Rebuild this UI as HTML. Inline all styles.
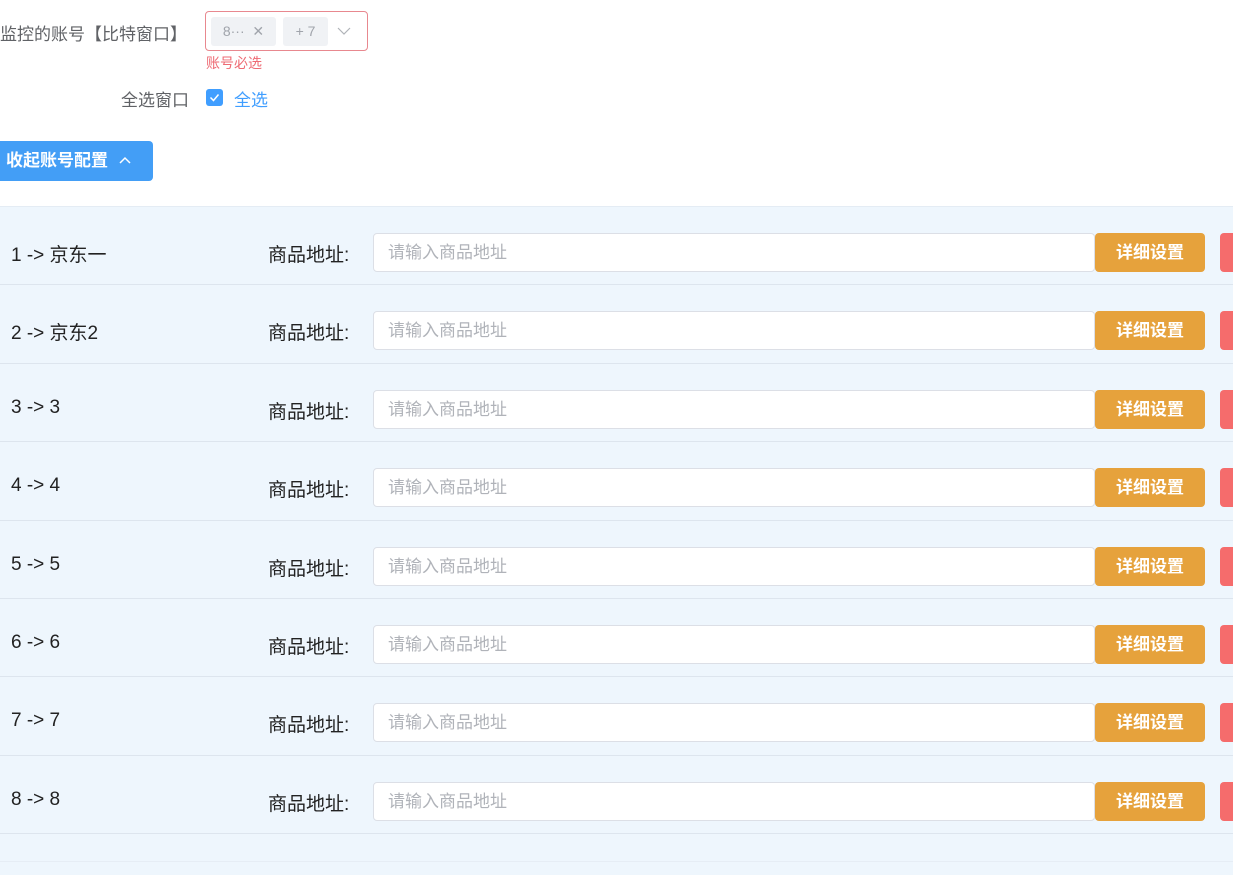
<!DOCTYPE html>
<html><head><meta charset="utf-8"><style>
*{box-sizing:border-box;margin:0;padding:0}
body{width:1233px;height:875px;overflow:hidden;background:#fff;font-family:"Liberation Sans","Noto Sans CJK SC",sans-serif;position:relative;color:#303133}
.abs{position:absolute}
.lbl{font-size:17px;color:#606266}
.sel{left:205px;top:11px;width:163px;height:40px;border:1px solid #e8888f;border-radius:4px}
.tag{top:5px;height:29px;background:#f0f2f5;border-radius:3px;color:#a0a4ab;font-size:14px;line-height:29px;text-align:center}
.err{left:206px;top:53px;font-size:14px;color:#ee6a73}
.cb{left:206px;top:89px;width:17px;height:17px;background:#409eff;border-radius:3px}
.btn{left:0;top:141px;width:153px;height:40px;background:#439ef6;border-radius:0 4px 4px 0;color:#fff;font-size:17px;font-weight:bold;line-height:40px;padding-left:6px}
.panel{left:0;top:206px;width:1233px;height:669px;background:#eef6fd;border-top:1px solid #e4ecf4}
.row{position:absolute;left:0;width:1233px;height:78.4px;border-bottom:1px solid #dde5ee}
.row .n{position:absolute;left:11px;top:33px;font-size:19px;color:#222}
.row .k{position:absolute;left:268px;top:33px;font-size:19px;color:#222}
.row .in{position:absolute;left:373px;top:26px;width:722px;height:39px;background:#fff;border:1px solid #dcdfe6;border-radius:4px;font-size:17px;color:#b0b3b9;line-height:37px;padding-left:14px}
.row .o{position:absolute;left:1095px;top:26px;width:110px;height:39px;background:#e6a23c;border-radius:4px;color:#fff;font-size:17px;font-weight:bold;line-height:39px;text-align:center}
.row .r{position:absolute;left:1220px;top:26px;width:30px;height:39px;background:#f56c6c;border-radius:4px}
</style></head><body>
<div class="abs lbl" style="left:0;top:20px">监控的账号【比特窗口】</div>
<div class="abs sel">
 <div class="abs tag" style="left:5px;width:65px">8··· &nbsp;✕</div>
 <div class="abs tag" style="left:77px;width:45px">+ 7</div>
 <svg class="abs" style="left:131px;top:14px" width="14" height="10" viewBox="0 0 14 10"><path d="M1 2 L7 8 L13 2" fill="none" stroke="#b0b3b9" stroke-width="1.2"/></svg>
</div>
<div class="abs err">账号必选</div>
<div class="abs lbl" style="left:121px;top:86px">全选窗口</div>
<div class="abs cb"><svg width="17" height="17" viewBox="0 0 17 17"><path d="M4.5 8.5 L7.5 11.5 L12.5 5.5" fill="none" stroke="#fff" stroke-width="1.5"/></svg></div>
<div class="abs" style="left:234px;top:86px;font-size:17px;color:#409eff">全选</div>
<div class="abs btn">收起账号配置 <svg style="margin-left:6px;vertical-align:2px" width="12" height="8" viewBox="0 0 12 8"><path d="M1 7 L6 2 L11 7" fill="none" stroke="#fff" stroke-width="1.5"/></svg></div>
<div class="abs panel">
 <div class="row" style="top:0"><span class="n">1 -&gt; 京东一</span><span class="k">商品地址:</span><div class="in">请输入商品地址</div><div class="o">详细设置</div><div class="r"></div></div>
 <div class="row" style="top:78.4px"><span class="n">2 -&gt; 京东2</span><span class="k">商品地址:</span><div class="in">请输入商品地址</div><div class="o">详细设置</div><div class="r"></div></div>
 <div class="row" style="top:156.8px"><span class="n">3 -&gt; 3</span><span class="k">商品地址:</span><div class="in">请输入商品地址</div><div class="o">详细设置</div><div class="r"></div></div>
 <div class="row" style="top:235.2px"><span class="n">4 -&gt; 4</span><span class="k">商品地址:</span><div class="in">请输入商品地址</div><div class="o">详细设置</div><div class="r"></div></div>
 <div class="row" style="top:313.6px"><span class="n">5 -&gt; 5</span><span class="k">商品地址:</span><div class="in">请输入商品地址</div><div class="o">详细设置</div><div class="r"></div></div>
 <div class="row" style="top:392px"><span class="n">6 -&gt; 6</span><span class="k">商品地址:</span><div class="in">请输入商品地址</div><div class="o">详细设置</div><div class="r"></div></div>
 <div class="row" style="top:470.4px"><span class="n">7 -&gt; 7</span><span class="k">商品地址:</span><div class="in">请输入商品地址</div><div class="o">详细设置</div><div class="r"></div></div>
 <div class="row" style="top:548.8px"><span class="n">8 -&gt; 8</span><span class="k">商品地址:</span><div class="in">请输入商品地址</div><div class="o">详细设置</div><div class="r"></div></div>
 <div class="abs" style="left:0;top:654px;width:1233px;height:1px;background:#e6edf5"></div>
</div>
</body></html>
